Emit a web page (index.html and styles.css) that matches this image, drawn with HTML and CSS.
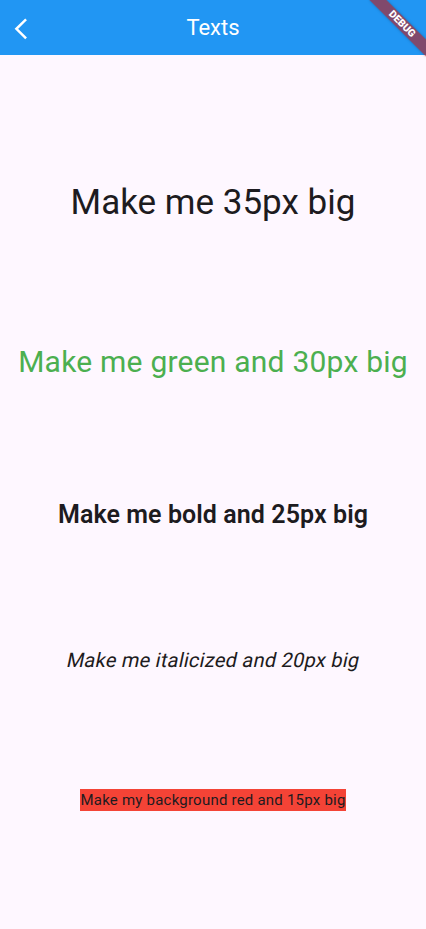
FILE: index.html
```html
<!DOCTYPE html>
<html lang="en">
<head>
<meta charset="utf-8">
<title>Texts</title>
<link rel="stylesheet" href="styles.css">
</head>
<body>
<div class="app">
  <header class="appbar">
    <div class="leading">
      <svg width="56" height="55" viewBox="0 0 56 55" aria-hidden="true">
        <polyline points="25.2,18.2 16.4,26.8 25.2,35.4" fill="none" stroke="#ffffff" stroke-width="2.5" stroke-linecap="square" stroke-linejoin="miter"/>
      </svg>
    </div>
    <h1 class="title">Texts</h1>
    <div class="trailing"></div>
  </header>
  <main class="content">
    <p class="t t35">Make me 35px big</p>
    <p class="t t30">Make me green and 30px big</p>
    <p class="t t25">Make me bold and 25px big</p>
    <p class="t t20"><span class="slant">Make me italicized and 20px big</span></p>
    <p class="t t15"><span class="redbg">Make my background red and 15px big</span></p>
  </main>
  <div class="banner"><span>DEBUG</span></div>
</div>
</body>
</html>
```
FILE: styles.css
```css
* { box-sizing: border-box; }
html, body {
  margin: 0;
  padding: 0;
  width: 426px;
  height: 929px;
  overflow: hidden;
}
body {
  font-family: Roboto, "Noto Sans", "Liberation Sans", sans-serif;
  background: #FEF7FF;
  color: #1D1B20;
}
.app {
  position: relative;
  width: 426px;
  height: 929px;
  display: flex;
  flex-direction: column;
  overflow: hidden;
}
.appbar {
  height: 55px;
  flex: 0 0 55px;
  background: #2196F3;
  display: grid;
  grid-template-columns: 56px 1fr 56px;
  align-items: center;
}
.leading {
  height: 55px;
  display: flex;
}
.title {
  margin: 0;
  text-align: center;
  color: #ffffff;
  font-size: 22px;
  font-weight: 400;
  line-height: 55px;
  padding-bottom: 3px;
}
.content {
  flex: 1 1 auto;
  display: flex;
  flex-direction: column;
  justify-content: space-evenly;
  align-items: center;
  padding-top: 9px;
}
.t {
  margin: 0;
  line-height: 1.36;
  white-space: nowrap;
  text-align: center;
}
.t35 { font-size: 35px; }
.t30 { font-size: 30px; color: #4CAF50; letter-spacing: 0.22px; }
.t25 { font-size: 25px; font-weight: 600; letter-spacing: 0.08px; }
.t20 { font-size: 20px; }
.slant {
  display: inline-block;
  transform: skewX(-12deg);
  letter-spacing: 0.25px;
}
.t15 { font-size: 15px; margin-bottom: 3px; }
.redbg {
  display: inline-block;
  background: #F44336;
  line-height: 22px;
  letter-spacing: 0.22px;
}
.banner {
  position: absolute;
  left: 362px;
  top: 18px;
  width: 80px;
  height: 12px;
  transform: rotate(45deg);
  background: rgba(183, 28, 28, 0.63);
  box-shadow: 0 0 3px rgba(0, 0, 0, 0.25);
  display: flex;
  align-items: center;
  justify-content: center;
}
.banner span {
  color: #ffffff;
  font-size: 10.2px;
  font-weight: 900;
  line-height: 1;
}
```
